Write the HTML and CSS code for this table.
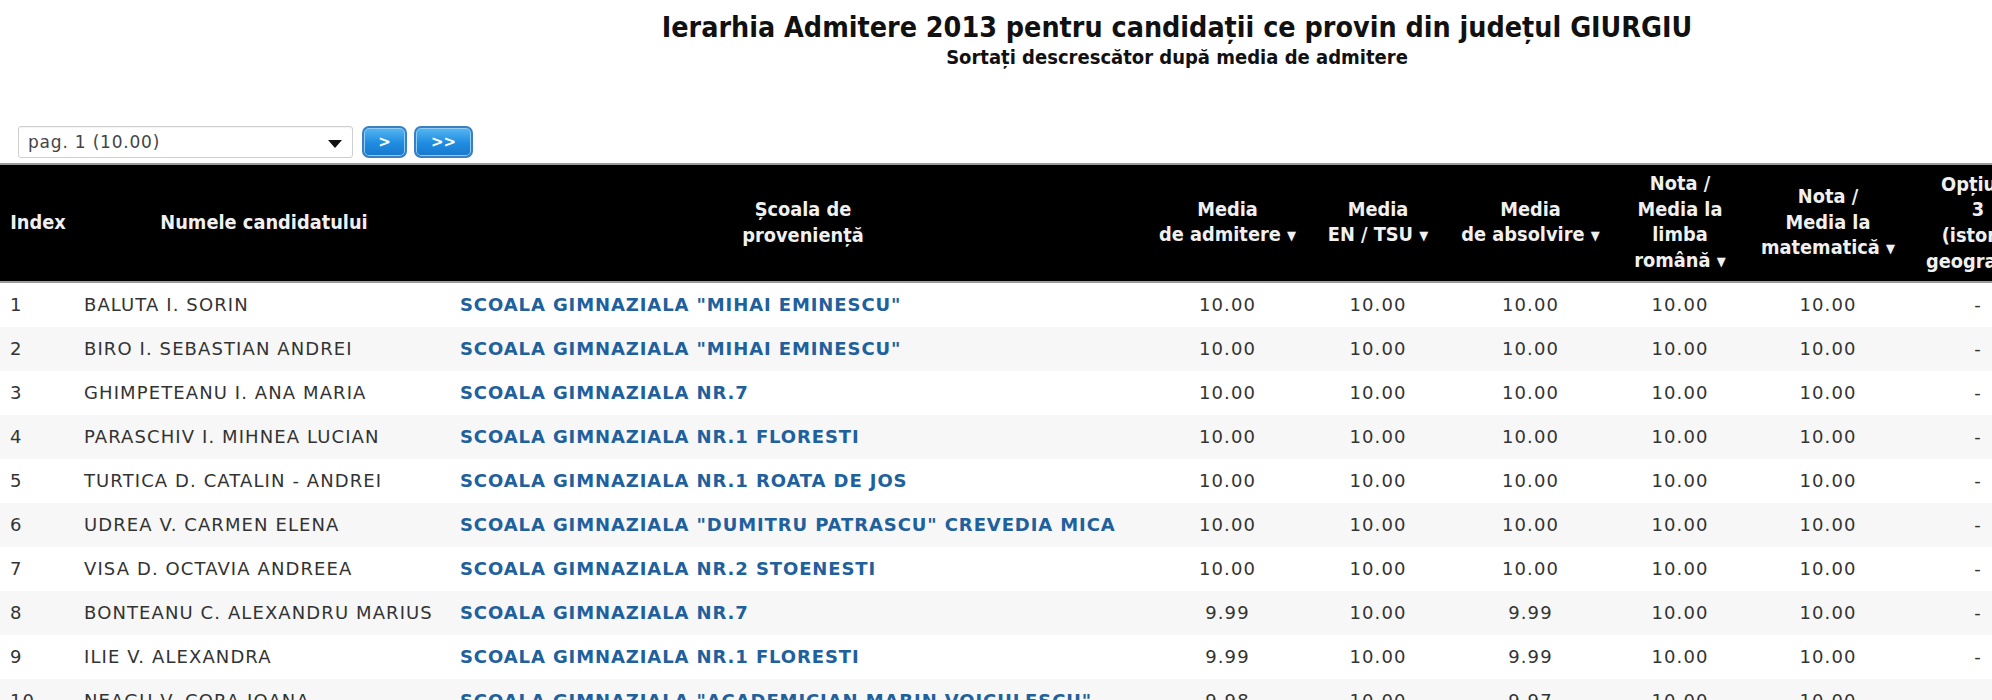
FILE: index.html
```html
<!DOCTYPE html>
<html lang="ro">
<head>
<meta charset="utf-8">
<title>Ierarhia Admitere 2013 - GIURGIU</title>
<link rel="stylesheet" href="styles.css">
</head>
<body>
<div class="page">
  <div class="heading">
    <h1 class="title">Ierarhia Admitere 2013 pentru candidații ce provin din județul GIURGIU</h1>
    <h2 class="subtitle">Sortați descrescător după media de admitere</h2>
  </div>

  <div class="toolbar">
    <div class="select">
      <span class="select-text">pag. 1 (10.00)</span>
      <span class="select-caret"></span>
    </div>
    <button class="btn btn-next">&gt;</button>
    <button class="btn btn-last">&gt;&gt;</button>
  </div>

  <table class="results">
    <colgroup>
      <col class="c-index"><col class="c-name"><col class="c-school">
      <col class="c-adm"><col class="c-en"><col class="c-abs"><col class="c-ro"><col class="c-mat"><col class="c-opt"><col class="c-x"><col class="c-x">
    </colgroup>
    <thead>
      <tr>
        <th>Index</th>
        <th>Numele candidatului</th>
        <th>Școala de<br>proveniență</th>
        <th>Media<br>de admitere <span class="arr">▼</span></th>
        <th>Media<br>EN / TSU <span class="arr">▼</span></th>
        <th>Media<br>de absolvire <span class="arr">▼</span></th>
        <th>Nota /<br>Media la<br>limba<br>română <span class="arr">▼</span></th>
        <th>Nota /<br>Media la<br>matematică <span class="arr">▼</span></th>
        <th>Opțiuni<br>3<br>(istorie<br>geografie)</th>
        <th>Opțiuni<br>4<br>(limba<br>modernă)</th>
        <th>Media<br>finală</th>
      </tr>
    </thead>
    <tbody>
      <tr><td class="idx">1</td><td class="name">BALUTA I. SORIN</td><td class="school"><a href="#">SCOALA GIMNAZIALA "MIHAI EMINESCU"</a></td><td>10.00</td><td>10.00</td><td>10.00</td><td>10.00</td><td>10.00</td><td>-</td><td>-</td><td>-</td></tr>
      <tr><td class="idx">2</td><td class="name">BIRO I. SEBASTIAN ANDREI</td><td class="school"><a href="#">SCOALA GIMNAZIALA "MIHAI EMINESCU"</a></td><td>10.00</td><td>10.00</td><td>10.00</td><td>10.00</td><td>10.00</td><td>-</td><td>-</td><td>-</td></tr>
      <tr><td class="idx">3</td><td class="name">GHIMPETEANU I. ANA MARIA</td><td class="school"><a href="#">SCOALA GIMNAZIALA NR.7</a></td><td>10.00</td><td>10.00</td><td>10.00</td><td>10.00</td><td>10.00</td><td>-</td><td>-</td><td>-</td></tr>
      <tr><td class="idx">4</td><td class="name">PARASCHIV I. MIHNEA LUCIAN</td><td class="school"><a href="#">SCOALA GIMNAZIALA NR.1 FLORESTI</a></td><td>10.00</td><td>10.00</td><td>10.00</td><td>10.00</td><td>10.00</td><td>-</td><td>-</td><td>-</td></tr>
      <tr><td class="idx">5</td><td class="name">TURTICA D. CATALIN - ANDREI</td><td class="school"><a href="#">SCOALA GIMNAZIALA NR.1 ROATA DE JOS</a></td><td>10.00</td><td>10.00</td><td>10.00</td><td>10.00</td><td>10.00</td><td>-</td><td>-</td><td>-</td></tr>
      <tr><td class="idx">6</td><td class="name">UDREA V. CARMEN ELENA</td><td class="school"><a href="#">SCOALA GIMNAZIALA "DUMITRU PATRASCU" CREVEDIA MICA</a></td><td>10.00</td><td>10.00</td><td>10.00</td><td>10.00</td><td>10.00</td><td>-</td><td>-</td><td>-</td></tr>
      <tr><td class="idx">7</td><td class="name">VISA D. OCTAVIA ANDREEA</td><td class="school"><a href="#">SCOALA GIMNAZIALA NR.2 STOENESTI</a></td><td>10.00</td><td>10.00</td><td>10.00</td><td>10.00</td><td>10.00</td><td>-</td><td>-</td><td>-</td></tr>
      <tr><td class="idx">8</td><td class="name">BONTEANU C. ALEXANDRU MARIUS</td><td class="school"><a href="#">SCOALA GIMNAZIALA NR.7</a></td><td>9.99</td><td>10.00</td><td>9.99</td><td>10.00</td><td>10.00</td><td>-</td><td>-</td><td>-</td></tr>
      <tr><td class="idx">9</td><td class="name">ILIE V. ALEXANDRA</td><td class="school"><a href="#">SCOALA GIMNAZIALA NR.1 FLORESTI</a></td><td>9.99</td><td>10.00</td><td>9.99</td><td>10.00</td><td>10.00</td><td>-</td><td>-</td><td>-</td></tr>
      <tr><td class="idx">10</td><td class="name">NEAGU V. CORA IOANA</td><td class="school"><a href="#">SCOALA GIMNAZIALA "ACADEMICIAN MARIN VOICULESCU"</a></td><td>9.98</td><td>10.00</td><td>9.97</td><td>10.00</td><td>10.00</td><td>-</td><td>-</td><td>-</td></tr>
      <tr><td class="idx">11</td><td class="name">POPA M. ANDREI</td><td class="school"><a href="#">SCOALA GIMNAZIALA NR.7</a></td><td>9.98</td><td>10.00</td><td>9.96</td><td>10.00</td><td>10.00</td><td>-</td><td>-</td><td>-</td></tr>
    </tbody>
  </table>
</div>
</body>
</html>
```

FILE: styles.css
```css
html, body {
  margin: 0;
  padding: 0;
  background: #ffffff;
}

body {
  font-family: "DejaVu Sans", Verdana, sans-serif;
  color: #333333;
}

.page {
  width: max-content;
}

.heading {
  text-align: center;
  padding-top: 11px;
}

.title {
  margin: 0;
  font-family: "DejaVu Sans Condensed", "DejaVu Sans", sans-serif;
  font-weight: bold;
  font-size: 28.4px;
  line-height: 34px;
  color: #111111;
}

.subtitle {
  margin: 0;
  font-family: "DejaVu Sans Condensed", "DejaVu Sans", sans-serif;
  font-weight: bold;
  font-size: 20px;
  line-height: 24px;
  color: #111111;
}

.toolbar {
  display: flex;
  align-items: center;
  gap: 7px;
  padding: 0 0 0 18px;
  margin-top: 57px;
  height: 32px;
  margin-bottom: 5px;
}

.select {
  box-sizing: border-box;
  width: 335px;
  height: 32px;
  border: 1px solid #cfcfcf;
  border-radius: 3px;
  background: #ffffff;
  display: flex;
  align-items: center;
  justify-content: space-between;
  padding: 0 10px 0 9px;
  box-shadow: inset 0 1px 1px rgba(0,0,0,0.05);
}

.select-text {
  font-size: 17px;
  letter-spacing: 0.8px;
  color: #444444;
}

.select-caret {
  width: 0;
  height: 0;
  border-left: 7px solid transparent;
  border-right: 7px solid transparent;
  border-top: 8px solid #111111;
  margin-top: 3px;
}

.btn {
  box-sizing: border-box;
  height: 32px;
  border: 2px solid #3b7fbf;
  border-radius: 7px;
  background: linear-gradient(#55b6f2, #1f8ce0 55%, #1878cc);
  box-shadow: inset 0 0 0 1px #8fcdf5;
  color: #ffffff;
  font-family: "DejaVu Sans", sans-serif;
  font-weight: bold;
  font-size: 15px;
  padding: 0;
  cursor: pointer;
}

.btn-next { width: 45px; margin-left: 2px; }
.btn-last { width: 59px; }

.results {
  border-collapse: collapse;
  table-layout: fixed;
  width: 2354px;
}

.c-index { width: 76px; }
.c-name { width: 376px; }
.c-school { width: 702px; }
.c-adm { width: 147px; }
.c-en { width: 154px; }
.c-abs { width: 151px; }
.c-ro { width: 148px; }
.c-mat { width: 148px; }
.c-opt { width: 152px; }
.c-x { width: 150px; }

.results thead tr {
  background: #000000;
  border-top: 2px solid #9a9a9a;
  border-bottom: 2px solid #9a9a9a;
}

.results th {
  height: 117px;
  box-sizing: border-box;
  padding: 6px 2px;
  font-family: "DejaVu Sans Condensed", "DejaVu Sans", sans-serif;
  font-weight: bold;
  font-size: 19.8px;
  line-height: 25.7px;
  color: #f0f0f0;
  text-align: center;
  vertical-align: middle;
  white-space: nowrap;
}

.results th .arr {
  font-size: 13px;
  vertical-align: 1px;
}

.results td {
  height: 44px;
  padding: 0 4px;
  font-size: 18px;
  letter-spacing: 1.1px;
  color: #333333;
  text-align: center;
  white-space: nowrap;
}

.results tbody tr:nth-child(even) {
  background: #f7f7f7;
}

.results td.idx {
  text-align: left;
  padding-left: 10px;
}

.results td.name {
  text-align: left;
  padding-left: 8px;
}

.results td.school {
  text-align: left;
  padding-left: 8px;
}

.results td.school a {
  color: #20609c;
  font-weight: bold;
  text-decoration: none;
  letter-spacing: 0.9px;
}
```
